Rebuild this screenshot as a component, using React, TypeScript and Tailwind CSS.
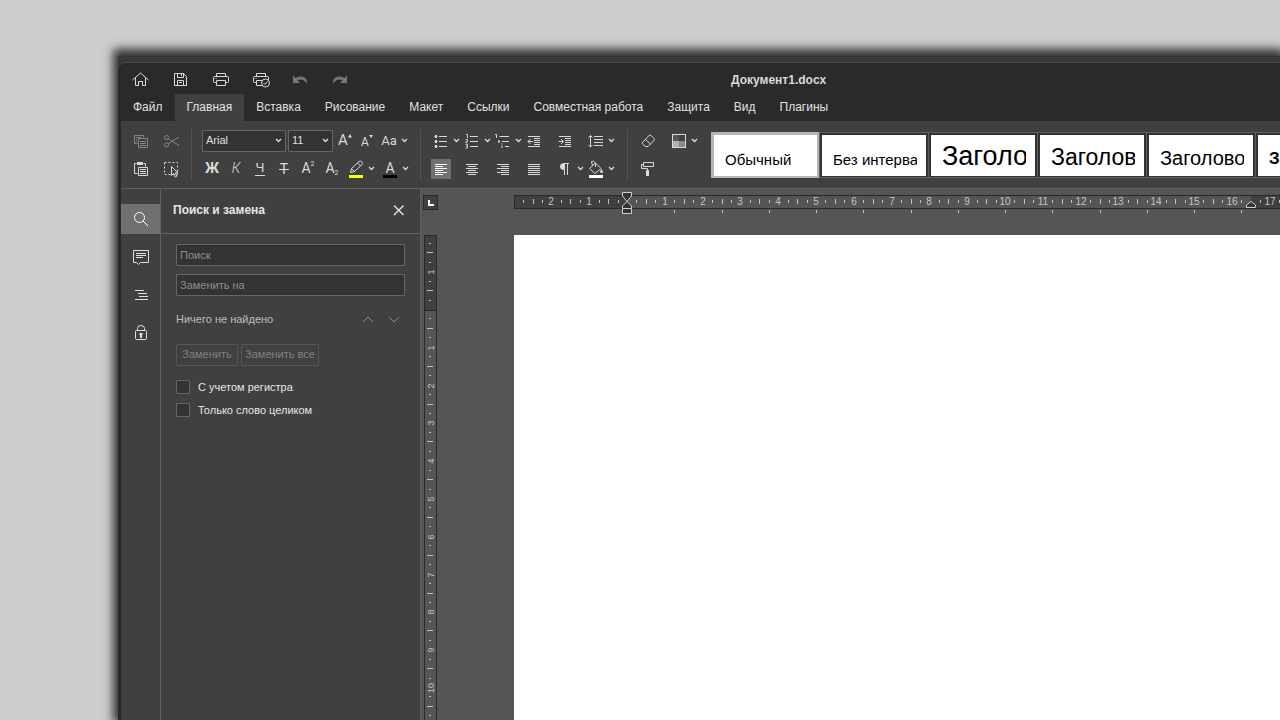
import type { ReactNode } from "react";

const CM = 37.8;

const tabs = [
  "Файл",
  "Главная",
  "Вставка",
  "Рисование",
  "Макет",
  "Ссылки",
  "Совместная работа",
  "Защита",
  "Вид",
  "Плагины",
];

const paragraphStyles = [
  { name: "Обычный", className: "text-[15px] pt-[8px]" },
  { name: "Без интерва", className: "text-[15px] pt-[8px]" },
  { name: "Заголо", className: "text-[27px]" },
  { name: "Заголов", className: "text-[23px] pt-[2px]" },
  { name: "Заголово", className: "text-[20px] pt-[4px]" },
  { name: "Заголов", className: "text-[17px] font-bold pt-[6px]" },
];

function Icon({ children, className = "" }: { children: ReactNode; className?: string }) {
  return (
    <svg
      viewBox="0 0 20 20"
      className={`w-5 h-5 shrink-0 ${className}`}
      fill="none"
      stroke="currentColor"
      aria-hidden="true"
    >
      {children}
    </svg>
  );
}

function Chevron() {
  return (
    <svg width="7" height="5" viewBox="0 0 7 5" fill="none" stroke="currentColor" strokeWidth="1.3" aria-hidden="true">
      <path d="M1 1l2.5 2.5L6 1" />
    </svg>
  );
}

type ToolProps = {
  label: string;
  children: ReactNode;
  menu?: boolean;
  active?: boolean;
  disabled?: boolean;
};

function Tool({ label, children, menu, active, disabled }: ToolProps) {
  return (
    <div className={`flex items-center ${disabled ? "text-[#868686]" : "text-[#d9d9d9]"}`}>
      <button
        aria-label={label}
        disabled={disabled}
        className={`w-5 h-5 flex items-center justify-center ${active ? "bg-[#707070] text-white" : ""}`}
      >
        {children}
      </button>
      {menu && (
        <button aria-label={`${label}: варианты`} className="w-[10px] h-5 flex items-center justify-center">
          <Chevron />
        </button>
      )}
    </div>
  );
}

function Separator() {
  return <div className="w-px h-[52px] self-center bg-[#545454]" />;
}

function Lines({ rows }: { rows: number[][] }) {
  return (
    <Icon>
      {rows.map(([x1, x2], i) => (
        <path key={i} d={`M${x1} ${5.5 + i * 2}H${x2}`} />
      ))}
    </Icon>
  );
}

function PrinterShape() {
  return <path d="M5.5 7.5v-3h9v3M5.5 13.5h-2q-1 0-1-1v-4q0-1 1-1h13q1 0 1 1v4q0 1-1 1h-2M5.5 11.5h9v5h-9zM4.5 9.5h1" />;
}

function UndoShape() {
  return <path d="M3 6.5V14h7l-2.500-2.500q5-3 9.500 3 .5-4-2.500-6T5.500 9z" fill="currentColor" stroke="none" />;
}

/* Title bar */
function TitleBar() {
  const quick = "w-10 flex justify-center";
  return (
    <header className="flex items-center h-[31px] text-[#d9d9d9]">
      <div className="flex -ml-px">
        <button aria-label="Главная страница" className={quick}>
          <Icon>
            <path d="M2.5 11l8-7 8 7M5.5 8.5v8h3v-4h4v4h3v-8" />
          </Icon>
        </button>
        <button aria-label="Сохранить" className={quick}>
          <Icon>
            <path d="M4.5 4.5h9l3 3v9h-12zM7.5 4.5v4h6v-4M7.5 16.5v-5h6v5M11.5 5v2M9 13.5h3" />
          </Icon>
        </button>
        <button aria-label="Печать" className={quick}>
          <Icon className="translate-x-px">
            <PrinterShape />
          </Icon>
        </button>
        <button aria-label="Быстрая печать" className={quick}>
          <Icon className="translate-x-px">
            <PrinterShape />
            <circle cx="14.5" cy="14" r="4" fill="#2a2a2a" />
            <path d="M12.5 14l1.5 1.5 2.500-3" />
          </Icon>
        </button>
        <button aria-label="Отменить" className={`${quick} text-[#777]`} disabled>
          <Icon>
            <UndoShape />
          </Icon>
        </button>
        <button aria-label="Повторить" className={`${quick} text-[#777]`} disabled>
          <Icon className="-scale-x-100">
            <UndoShape />
          </Icon>
        </button>
      </div>
      <h1 className="ml-[371px] pt-[2px] text-xs font-bold whitespace-nowrap">Документ1.docx</h1>
    </header>
  );
}

function FileGroup() {
  return (
    <div className="grid grid-cols-[30px_30px] grid-rows-[20px_20px] gap-y-2 pl-[10px] w-[70px]">
      <Tool label="Копировать" disabled>
        <Icon>
          <path d="M6.5 12.5h-3v-8h9v2M5 6.5h5M5 8.5h1M5 10.5h1M7.5 7.5h9v9h-9zM9 10.5h6M9 12.5h6M9 14.5h6" />
        </Icon>
      </Tool>
      <Tool label="Вырезать" disabled>
        <Icon>
          <circle cx="5.5" cy="6.5" r="2" />
          <circle cx="5.5" cy="14" r="2" />
          <path d="M7.2 7.7L18 14.5M7.2 12.8L18 6" />
        </Icon>
      </Tool>
      <Tool label="Вставить">
        <Icon>
          <path d="M6.5 14.5h-3v-10h2M12.5 4.5h2v3M7.5 8.5h9v8h-9zM9 10.5h6M9 12.5h6M9 14.5h6" />
          <path d="M6 3h6v3H6z" fill="currentColor" stroke="none" />
        </Icon>
      </Tool>
      <Tool label="Выделить всё">
        <Icon>
          <path d="M3.5 3.5h13v12h-13z" strokeDasharray="2 2" />
          <path d="M10.5 7.5v9l2.2-2 1.5 3.5 1.6-.8-1.5-3.2H17z" fill="#404040" />
        </Icon>
      </Tool>
    </div>
  );
}

function Select({ label, value, className }: { label: string; value: string; className: string }) {
  return (
    <div className={`relative flex items-center text-[#e0e0e0] ${className}`}>
      <select
        aria-label={label}
        className="appearance-none w-full h-[22px] pl-[3px] text-[11px] bg-[#333] border border-[#666] rounded-[1px]"
      >
        <option>{value}</option>
      </select>
      <span className="absolute inset-y-0 right-1 flex items-center pointer-events-none">
        <Chevron />
      </span>
    </div>
  );
}

function FontGroup() {
  return (
    <div className="grid grid-rows-[20px_20px] gap-y-2 pl-[10px] w-[228px] font-[Roboto]">
      <div className="flex items-center gap-[2px]">
        <Select label="Шрифт" value="Arial" className="w-[84px] font-['Liberation_Sans']" />
        <Select label="Размер шрифта" value="11" className="w-[45px] font-['Liberation_Sans']" />
        <Tool label="Увеличить размер">
          <span className="text-[15px]">A</span>
          <svg width="4" height="4" viewBox="0 0 4 4" className="mb-[10px]" aria-hidden="true">
            <path d="M0 3.5L2 0l2 3.500z" fill="currentColor" />
          </svg>
        </Tool>
        <Tool label="Уменьшить размер">
          <span className="text-[12px] pt-[2px]">A</span>
          <svg width="4" height="3" viewBox="0 0 4 3" className="mb-2" aria-hidden="true">
            <path d="M0 0h4L2 3z" fill="currentColor" />
          </svg>
        </Tool>
        <Tool label="Изменить регистр" menu>
          <span className="text-[13px]">Aa</span>
        </Tool>
      </div>
      <div className="flex items-center gap-1">
        <Tool label="Полужирный">
          <b className="text-[14px]">Ж</b>
        </Tool>
        <Tool label="Курсив">
          <i className="text-[14px] font-light">К</i>
        </Tool>
        <Tool label="Подчёркнутый">
          <span className="text-[13px] leading-[14px] border-b border-current px-px">Ч</span>
        </Tool>
        <Tool label="Зачёркнутый">
          <Icon>
            <text x="10" y="15" textAnchor="middle" fontSize="14" fill="currentColor" stroke="none">
              Т
            </text>
            <path d="M5 10.5h10" />
          </Icon>
        </Tool>
        <Tool label="Надстрочные знаки">
          <span className="text-[14px]">A</span>
          <span className="text-[7px] leading-[8px] mb-[10px]">2</span>
        </Tool>
        <Tool label="Подстрочные знаки">
          <span className="text-[14px]">A</span>
          <span className="text-[7px] leading-[8px] mt-[9px]">2</span>
        </Tool>
        <Tool label="Цвет выделения" menu>
          <Icon>
            <path d="M4.5 13.5l1-4L13 2.5q1.500-1 2.800.3T16 5.600l-7.500 7zM5.500 9.500l3 3M11.500 4l3 3" />
            <path d="M3 16h14v3H3z" fill="#ffff00" stroke="none" />
          </Icon>
        </Tool>
        <Tool label="Цвет шрифта" menu>
          <Icon>
            <text x="10" y="14" textAnchor="middle" fontSize="14" fill="currentColor" stroke="none">
              A
            </text>
            <path d="M3 16h14v3H3z" fill="#000" stroke="none" />
          </Icon>
        </Tool>
      </div>
    </div>
  );
}

function ParagraphGroup() {
  return (
    <div className="grid grid-cols-[repeat(6,31px)] grid-rows-[20px_20px] gap-y-2 pl-[10px] w-[206px]">
      <Tool label="Маркированный список" menu>
        <Icon>
          <path d="M8 5.5h8M8 10.5h8M8 15.5h8" />
          <path
            d="M4 4h2v3H4zM3.5 5h3v1h-3zM4 9h2v3H4zM3.5 10h3v1h-3zM4 14h2v3H4zM3.5 15h3v1h-3z"
            fill="currentColor"
            stroke="none"
          />
        </Icon>
      </Tool>
      <Tool label="Нумерованный список" menu>
        <Icon>
          <path d="M8 5.5h8M8 10.5h8M8 15.5h8" />
          <path d="M4 3.5h1.5V7M3.5 8.5h2v2H4V12h1.5M3.5 13.5h2V17h-2M4 15.3h1.5" strokeWidth=".9" />
        </Icon>
      </Tool>
      <Tool label="Многоуровневый список" menu>
        <Icon>
          <path d="M6.5 5.5H16M9 10.5h7M12 15.5h4" />
          <path d="M2 3.5h1.5V7" />
          <path d="M5 9.5h2v2H5zM8.5 14.5h1V17h-1zM8.5 12.5h1v1h-1z" fill="currentColor" stroke="none" />
        </Icon>
      </Tool>
      <Tool label="Уменьшить отступ">
        <Icon>
          <path d="M4 5.5h12M10 7.5h6M10 9.5h6M10 11.5h6M10 13.5h6M4 15.5h12M4 10.5h5M6.5 8L4 10.5 6.5 13" />
        </Icon>
      </Tool>
      <Tool label="Увеличить отступ">
        <Icon>
          <path d="M4 5.5h12M10 7.5h6M10 9.5h6M10 11.5h6M10 13.5h6M4 15.5h12M3.5 10.5h5M6 8l2.5 2.5L6 13" />
        </Icon>
      </Tool>
      <Tool label="Междустрочный интервал" menu>
        <Icon>
          <path d="M8 5.5h9M8 8.5h9M8 11.5h9M8 14.5h9M4.5 4.5V16M2.5 6.5l2-2 2 2M2.5 14l2 2 2-2" />
        </Icon>
      </Tool>
      <Tool label="По левому краю" active>
        <Lines rows={[[4, 16], [4, 12], [4, 16], [4, 12], [4, 16], [4, 12]]} />
      </Tool>
      <Tool label="По центру">
        <Lines rows={[[4, 16], [6, 14], [4, 16], [6, 14], [4, 16], [6, 14]]} />
      </Tool>
      <Tool label="По правому краю">
        <Lines rows={[[4, 16], [8, 16], [4, 16], [8, 16], [4, 16], [8, 16]]} />
      </Tool>
      <Tool label="По ширине">
        <Lines rows={[[4, 16], [4, 16], [4, 16], [4, 16], [4, 16], [4, 16]]} />
      </Tool>
      <Tool label="Непечатаемые символы" menu>
        <Icon>
          <path d="M9.5 5v11M12.5 5v11M8 4.5h6" />
          <path d="M9.5 4v7Q5 11 5 7.5T9.5 4z" fill="currentColor" stroke="none" />
        </Icon>
      </Tool>
      <Tool label="Заливка" menu>
        <Icon>
          <path d="M3.5 9.5l6-5.500L15 9.500l-6 5zM6.500 7l-1-4.500q2-1.500 4 1.500v4" />
          <path d="M15.5 10q3 4 0 4t0-4z" fill="currentColor" stroke="none" />
          <path d="M3 16h14v3H3z" fill="#fff" stroke="none" />
        </Icon>
      </Tool>
    </div>
  );
}

function Gallery() {
  return (
    <div className="flex self-start mt-[11px] ml-[11px]">
      {paragraphStyles.map((style, i) => (
        <button
          key={style.name + i}
          className={`h-[46px] shrink-0 border px-[2px] pt-[2px] pb-px ${
            i === 0 ? "w-[109px] border-[#b5b5b5] bg-[#b5b5b5]" : "w-[110px] -ml-px border-[#606060] bg-[#333]"
          }`}
        >
          <span className="flex items-center h-full bg-white pl-[11px] pr-[9px]">
            <span className={`overflow-hidden whitespace-nowrap text-left text-black leading-[32px] ${style.className}`}>
              {style.name}
            </span>
          </span>
        </button>
      ))}
    </div>
  );
}

function Toolbar() {
  return (
    <div className="flex h-[68px] bg-[#404040] border-b border-[#606060]">
      <div className="flex items-center">
        <FileGroup />
        <Separator />
        <FontGroup />
        <Separator />
        <ParagraphGroup />
        <Separator />
        <div className="grid grid-cols-[31px_31px] grid-rows-[20px_20px] gap-y-2 pl-[10px]">
          <Tool label="Очистить стиль">
            <Icon>
              <path d="M4.5 11.5l6.500-7q1-.8 2 0l3 3q.8 1 0 2l-6 6H7.500l-3-2.500q-.7-.8 0-1.500zM7.500 8.500l5 4.500" />
            </Icon>
          </Tool>
          <Tool label="Цветовая схема" menu>
            <Icon>
              <path d="M3 3h14v14H3z" fill="#d9d9d9" stroke="none" />
              <path d="M4 4h6v6H4z" fill="#555" stroke="none" />
              <path d="M10 4h6v6h-6z" fill="#404040" stroke="none" />
              <path d="M4 10h6v6H4z" fill="#b0b0b0" stroke="none" />
              <path d="M10 10h6v6h-6z" fill="#888" stroke="none" />
            </Icon>
          </Tool>
          <Tool label="Копировать стиль">
            <Icon>
              <path d="M5.5 3.5h10v4h-10zM5.5 5.5h-2v4h6v2" />
              <path d="M8 11h3v6H8z" fill="currentColor" stroke="none" />
            </Icon>
          </Tool>
        </div>
      </div>
      <Gallery />
    </div>
  );
}

/* Narrow strip of panel buttons */
function SideBar() {
  const item = "h-[30px] flex items-center justify-center";
  return (
    <nav className="w-[40px] shrink-0 flex flex-col gap-2 pt-[15px] border-r border-[#606060] text-[#e0e0e0]">
      <button aria-label="Поиск" className={`${item} bg-[#707070] text-white`}>
        <Icon>
          <circle cx="8.5" cy="8.5" r="5" />
          <path d="M12 12l5 5" />
        </Icon>
      </button>
      <button aria-label="Комментарии" className={item}>
        <Icon>
          <path d="M2.5 3.5h15v12h-8l-2 2-2-2h-3zM5 6.5h10M5 8.5h10M5 10.5h7" />
        </Icon>
      </button>
      <button aria-label="Навигация" className={item}>
        <Icon>
          <path d="M4 5.5h9M7 8.5h9M8 11.5h9M4 14.5h13" />
        </Icon>
      </button>
      <button aria-label="Защита" className={item}>
        <Icon>
          <path d="M6.5 8V5.5q0-3 3.500-3t3.500 3V8" />
          <rect x="4.5" y="7.5" width="11" height="9" rx="1" />
          <path d="M10 10v5M8.5 11h3" strokeWidth="2" />
        </Icon>
      </button>
    </nav>
  );
}

function SearchPanel() {
  const field =
    "w-full h-[22px] px-[3px] text-[11px] bg-[#333] border border-[#666] rounded-[1px] placeholder:text-[#8f8f8f]";
  const action = "h-[22px] pb-px border border-[#555] rounded-[1px]";
  const check = "appearance-none w-[14px] h-[14px] bg-[#333] border border-[#666] rounded-[1px]";
  return (
    <aside className="w-[260px] shrink-0 border-r border-[#606060] text-[11px] text-[#e6e6e6]">
      <div className="flex items-center justify-between h-[45px] pl-3 pr-[14px] pb-[2px] border-b border-[#606060]">
        <h2 className="text-xs font-bold">Поиск и замена</h2>
        <button aria-label="Закрыть">
          <svg width="14" height="14" viewBox="0 0 14 14" stroke="currentColor" strokeWidth="1.4" aria-hidden="true">
            <path d="M2 2.5l9.500 9.500M11.500 2.500L2 12" />
          </svg>
        </button>
      </div>
      <div className="px-[15px] pt-[10px]">
        <input type="text" aria-label="Поиск" placeholder="Поиск" className={field} />
        <input type="text" aria-label="Заменить на" placeholder="Заменить на" className={`${field} mt-2`} />
        <div className="flex items-center h-4 mt-[15px] text-[#bdbdbd]">
          <span className="flex-1">Ничего не найдено</span>
          <button aria-label="Предыдущее" className="w-[30px] flex justify-center text-[#8a8a8a]">
            <svg width="12" height="7" viewBox="0 0 12 7" fill="none" stroke="currentColor" aria-hidden="true">
              <path d="M1 6l5-5 5 5" />
            </svg>
          </button>
          <button aria-label="Следующее" className="w-[22px] flex justify-center text-[#8a8a8a]">
            <svg width="12" height="7" viewBox="0 0 12 7" fill="none" stroke="currentColor" aria-hidden="true">
              <path d="M1 1l5 5 5-5" />
            </svg>
          </button>
        </div>
        <div className="flex gap-[3px] mt-[17px] text-[#808080]">
          <button disabled className={`${action} w-[62px]`}>
            Заменить
          </button>
          <button disabled className={`${action} w-[78px]`}>
            Заменить все
          </button>
        </div>
        <label className="flex items-center gap-2 h-[14px] mt-[14px]">
          <input type="checkbox" className={check} />
          С учетом регистра
        </label>
        <label className="flex items-center gap-2 h-[14px] mt-[9px]">
          <input type="checkbox" className={check} />
          Только слово целиком
        </label>
      </div>
    </aside>
  );
}

/* Quarter-centimetre marks; whole centimetres carry their number */
function marks(from: number, to: number) {
  const list = [];
  for (let q = from * 4; q <= to * 4; q++) {
    if (q !== 0) list.push(q / 4);
  }
  return list;
}

function HorizontalRuler() {
  const zero = 113;
  const end = Math.round(zero + 16.5 * CM);
  return (
    <svg className="block w-full h-[21px] overflow-visible" fill="none" aria-hidden="true">
      <rect x="0.5" y="1.5" width="1400" height="13" fill="#404040" stroke="#2a2a2a" />
      <rect x={zero} y="2" width={end - zero} height="12" fill="#555" />
      {marks(-2.75, 17.25).map((cm) => {
        const x = Math.round(zero + cm * CM);
        if (Number.isInteger(cm)) {
          return (
            <text key={cm} x={x} y="11" textAnchor="middle" fontSize="10" fill="#c4c4c4">
              {Math.abs(cm)}
            </text>
          );
        }
        if (cm === 16.5) return null;
        const tall = Number.isInteger(cm * 2);
        return <path key={cm} d={tall ? `M${x + 0.5} 5v5` : `M${x + 0.5} 6v3`} stroke="#c0c0c0" />;
      })}
      {Array.from({ length: 13 }, (_, i) => Math.round(zero + (i + 1) * 1.25 * CM)).map((x) => (
        <path key={x} d={`M${x + 0.5} 16v3`} stroke="#c0c0c0" />
      ))}
      <path
        d={`M${zero - 4.5} -1.5h9V2L${zero} 7.5L${zero - 4.5} 2zM${zero - 4.5} 14.5V12L${zero} 7.5l4.500 4.500v2.500zM${zero - 4.5} 14.5h9v5h-9z`}
        fill="#333"
        stroke="#d0d0d0"
      />
      <path d={`M${end - 4.5} 13.5v-2.500L${end} 7.5l4.500 3.500v2.500z`} fill="#333" stroke="#d0d0d0" />
    </svg>
  );
}

function VerticalRuler() {
  const zero = 75;
  return (
    <svg className="block w-[14px] h-full overflow-visible" fill="none" aria-hidden="true">
      <rect x="0.5" y="0.5" width="12" height="1100" fill="#555" stroke="#2a2a2a" />
      <rect x="0.5" y="0.5" width="12" height={zero} fill="#404040" stroke="#2a2a2a" />
      {marks(-1.75, 12.75).map((cm) => {
        const y = Math.round(zero + cm * CM);
        if (Number.isInteger(cm)) {
          return (
            <text
              key={cm}
              transform={`translate(10 ${y}) rotate(-90)`}
              textAnchor="middle"
              fontSize="9"
              fill="#c4c4c4"
            >
              {Math.abs(cm)}
            </text>
          );
        }
        const tall = Number.isInteger(cm * 2);
        return <path key={cm} d={tall ? `M3 ${y - 0.5}h6` : `M5 ${y - 0.5}h2`} stroke="#c0c0c0" />;
      })}
    </svg>
  );
}

function Canvas() {
  return (
    <main className="flex-1 min-w-0 grid grid-cols-[93px_1fr] grid-rows-[46px_1fr] bg-[#555] overflow-hidden">
      <div className="pl-[2px] pt-[6px]">
        <button
          aria-label="Табуляция"
          className="w-[15px] h-[15px] flex items-center justify-center bg-[#404040] border border-[#2a2a2a]"
        >
          <svg width="7" height="7" viewBox="0 0 7 7" stroke="#fff" strokeWidth="2" fill="none" aria-hidden="true">
            <path d="M2 1v5h5" />
          </svg>
        </button>
      </div>
      <div className="pt-[5px]">
        <HorizontalRuler />
      </div>
      <div className="pl-[3px]">
        <VerticalRuler />
      </div>
      <div className="bg-white" contentEditable suppressContentEditableWarning aria-label="Документ" />
    </main>
  );
}

export default function App() {
  return (
    <div className="h-screen overflow-hidden pt-[56px] pl-[118px] bg-[#cdcdcd] font-['Liberation_Sans',Arial,sans-serif]">
      <div className="h-full pt-[6px] bg-[#383838] shadow-[0_-2px_9px_5px_#333]">
        <div className="h-full flex flex-col pl-[3px] rounded-tl-lg bg-[#2a2a2a] border-t border-[#484848]">
          <TitleBar />
          <nav className="flex h-[27px] text-xs text-[#e0e0e0]">
            {tabs.map((tab) => (
              <button
                key={tab}
                className={`px-3 pb-[2px] whitespace-nowrap ${tab === "Главная" ? "bg-[#404040]" : ""}`}
              >
                {tab}
              </button>
            ))}
          </nav>
          <Toolbar />
          <div className="flex flex-1 min-h-0 bg-[#404040]">
            <SideBar />
            <SearchPanel />
            <Canvas />
          </div>
        </div>
      </div>
    </div>
  );
}
